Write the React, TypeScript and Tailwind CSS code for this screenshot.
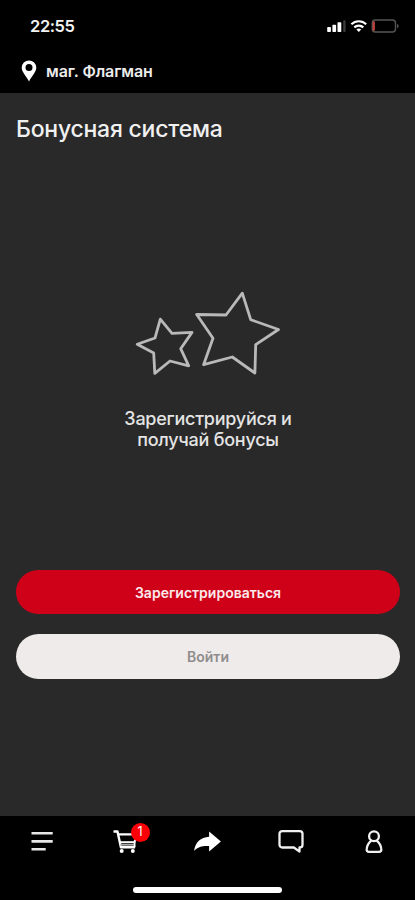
import type { ReactNode } from "react";

interface NavItem {
  id: string;
  label: string;
  icon: ReactNode;
  badge?: number;
}

const navItems: NavItem[] = [
  {
    id: "menu",
    label: "Меню",
    icon: (
      <svg className="w-8 h-8" viewBox="0 0 32 32" fill="none" stroke="#e8e8e8" strokeWidth="2.6">
        <path d="M5.5 7.2h21.2M5.5 15.4h21.2M5.5 23.2h14.2" />
      </svg>
    ),
  },
  {
    id: "cart",
    label: "Корзина",
    badge: 1,
    icon: (
      <svg className="w-8 h-8" viewBox="0 0 32 32" fill="none" stroke="#fff" strokeLinejoin="round">
        <path d="M4.5 5.5h4l3.4 15.8h14.2" strokeWidth="2.4" />
        <path d="M9.3 8.3h18.7l-2.6 8.2" strokeWidth="2.2" />
        <path d="M10.8 16.2h15" strokeWidth="2" />
        <path d="M11.3 18.8h14.5" stroke="#a8a8a8" strokeWidth="1.8" />
        <path d="M25.6 16.2v5" strokeWidth="1.8" />
        <circle cx="12.7" cy="25" r="2" fill="#fff" stroke="none" />
        <circle cx="23.8" cy="25" r="2" fill="#fff" stroke="none" />
      </svg>
    ),
  },
  {
    id: "share",
    label: "Поделиться",
    icon: (
      <svg className="w-8 h-8" viewBox="0 0 32 32" fill="#fff">
        <path d="M17.1 5.6 28.9 15.6 17.1 25.6v-5.5C11.2 19.7 6.6 20.3 2.1 24.9 3.2 16.6 8.600 11.2 17.1 10.8z" />
      </svg>
    ),
  },
  {
    id: "chat",
    label: "Чат",
    icon: (
      <svg className="w-8 h-8" viewBox="0 0 32 32" fill="none" stroke="#f0f0f0" strokeWidth="2.3" strokeLinejoin="round">
        <path d="M7.2 5.1h17.6a2.7 2.7 0 0 1 2.7 2.7v11a2.7 2.7 0 0 1-2.700 2.700h-.3v4.100l-5.600-4.100H7.200a2.700 2.700 0 0 1-2.700-2.700v-11a2.700 2.700 0 0 1 2.700-2.700z" />
      </svg>
    ),
  },
  {
    id: "profile",
    label: "Профиль",
    icon: (
      <svg className="w-8 h-8" viewBox="0 0 32 32" fill="none" stroke="#f0f0f0" strokeWidth="2.3" strokeLinejoin="round">
        <circle cx="16" cy="10.2" r="4.9" />
        <path d="M13.4 14.600c-2.500 1.900-4.200 4.400-4.700 8.300-.3 1.900.5 2.900 2.300 2.900h10c1.800 0 2.600-1 2.300-2.900-.5-3.900-2.200-6.400-4.700-8.300" />
      </svg>
    ),
  },
];

function StatusBar() {
  return (
    <div className="flex h-[50px] items-center justify-between pl-[30px] pr-[16px] pt-[2px]">
      <span className="text-[16.5px] font-semibold leading-none tracking-[-0.4px] text-[#f2f2f2]">22:55</span>
      <svg className="w-[72px] h-[14px]" viewBox="0 0 72 14" fill="none">
        {/* Signal */}
        <g fill="#fff">
          <rect x="0.2" y="8" width="3.7" height="5" rx="0.8" />
          <rect x="5.4" y="5.800" width="3.7" height="7.200" rx="0.8" />
          <rect x="10.5" y="3.2" width="3.8" height="9.8" rx="0.8" />
          <rect x="16.2" y="1.3" width="2.4" height="11.7" rx="0.8" fill="#3c3c3c" />
        </g>
        {/* Wi-Fi */}
        <g stroke="#fff" strokeWidth="2.2">
          <path d="M24.4 5.3a10.5 10.5 0 0 1 14.8 0" />
          <path d="M27.3 8.4a6.4 6.4 0 0 1 9 0" />
        </g>
        <path d="M29.4 10.6a3.5 3.5 0 0 1 4.8 0l-2.4 2.4z" fill="#fff" />
        {/* Battery */}
        <rect x="45.3" y="1" width="23.2" height="12" rx="3" stroke="#555" strokeWidth="1.4" />
        <path d="M46.8 3.4v7.4" stroke="#c0413a" strokeWidth="2.2" strokeLinecap="round" />
        <path d="M70 5v4.2c1-.3 1.6-1.1 1.6-2.1S71 5.3 70 5z" fill="#555" />
      </svg>
    </div>
  );
}

function Stars() {
  return (
    <svg
      className="w-[146px] h-[86px]"
      viewBox="0 0 146 86"
      fill="none"
      stroke="#b9b9b9"
      strokeWidth="2.8"
      strokeLinejoin="round"
    >
      <path d="M25.3 29.2 37 43.3 57 42.4 45.7 58.7 53.7 75.8 35 71 19.8 83.3 18.7 63 2.2 54.3 20 48z" />
      <path d="M107.3 3.2 115.7 29.7 143.5 39.5 120.7 54.7 119.9 83 97.3 67 68.6 74.7 78 48.3 61.7 24.5 91 25z" />
    </svg>
  );
}

export default function App() {
  return (
    <div className="flex h-[900px] w-[415px] flex-col overflow-hidden bg-[#292929] font-['Inter','Liberation_Sans',sans-serif]">
      <header className="h-[93px] bg-black">
        <StatusBar />
        <div className="flex h-[42px] items-center pl-[21px]">
          <svg className="w-[16px] h-[22px]" viewBox="0 0 16 22" fill="#fff">
            <path
              fillRule="evenodd"
              d="M8 .4a7.3 7.3 0 0 1 7.3 7.3c0 4.3-4.7 8.3-7.3 13.7C5.4 16 .7 12 .7 7.7A7.3 7.3 0 0 1 8 .4zm0 3.6a3.5 3.5 0 1 0 0 7 3.5 3.5 0 0 0 0-7z"
            />
          </svg>
          <span className="ml-[9px] text-[16px] font-semibold leading-none tracking-[-0.1px] text-[#ececec]">
            маг. Флагман
          </span>
        </div>
      </header>

      <main className="flex flex-1 flex-col pl-4 pr-[15px]">
        <h1 className="mt-[22px] text-[23px] font-medium leading-[28px] tracking-[-0.23px] text-[#f0f0f0]">
          Бонусная система
        </h1>

        <div className="mt-[147px] flex flex-col items-center">
          <Stars />
          <p className="mt-[32px] text-center text-[18px] font-medium leading-[21px] tracking-[-0.25px] text-[#e4e4e4]">
            Зарегистрируйся и
            <br />
            получай бонусы
          </p>
        </div>

        <div className="mt-[120px] flex flex-col gap-[20px]">
          <button className="h-[44px] rounded-full bg-[#cf0119] text-[14px] font-semibold text-[#fbe9ea]">
            Зарегистрироваться
          </button>
          <button className="h-[45px] rounded-full bg-[#efebeb] text-[14px] font-semibold text-[#8f8c8c]">
            Войти
          </button>
        </div>
      </main>

      <nav className="flex h-[84px] flex-col items-center justify-between bg-black pb-[7px] pt-[10px]">
        <div className="grid w-full grid-cols-5">
          {navItems.map((item) => (
            <button key={item.id} className="flex justify-center" aria-label={item.label}>
              <span className="relative">
                {item.icon}
                {item.badge && (
                  <span className="absolute -top-[3px] left-[22px] flex h-[19px] w-[19px] items-center justify-center rounded-full bg-[#fb0007] text-[12.5px] leading-none text-white">
                    {item.badge}
                  </span>
                )}
              </span>
            </button>
          ))}
        </div>
        <div className="h-[6px] w-[149px] rounded-full bg-white" />
      </nav>
    </div>
  );
}
